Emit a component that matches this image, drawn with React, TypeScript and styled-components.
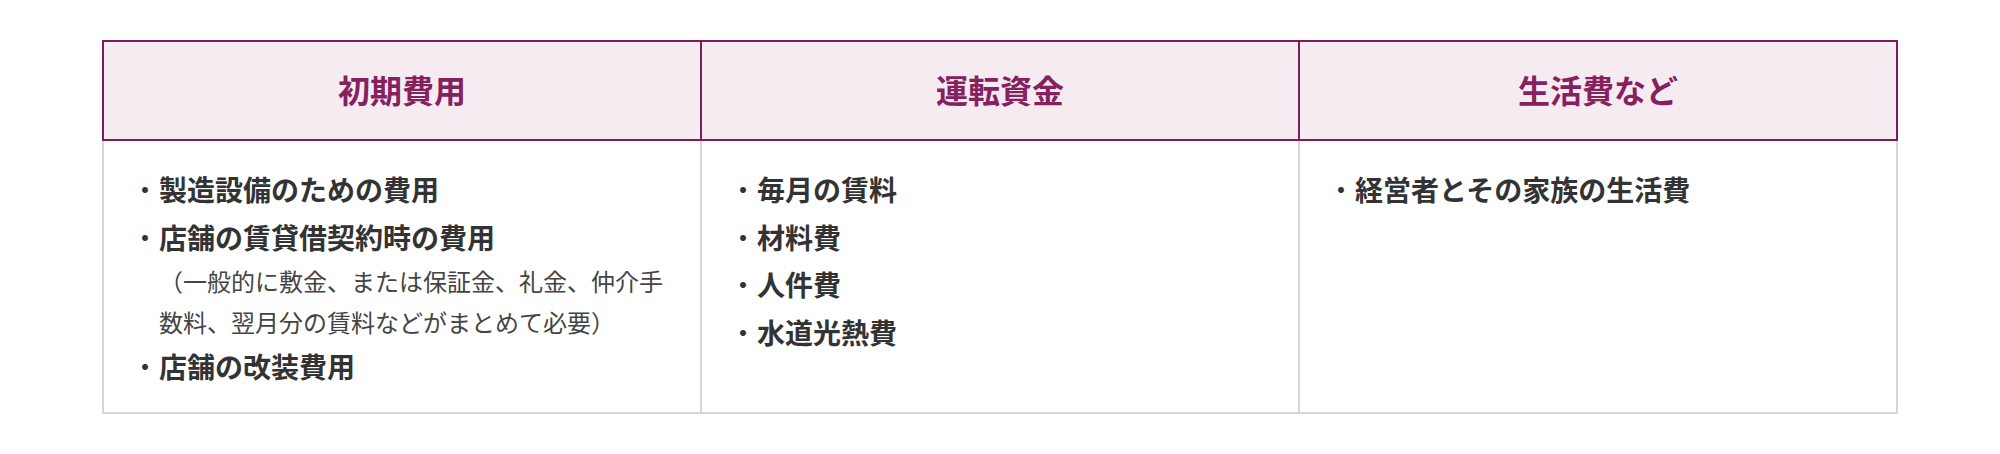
import styled, { createGlobalStyle } from "styled-components";
import { FC } from "react";

interface Column {
  title: string;
  items: { label: string; note?: string }[];
}

const columns: Column[] = [
  {
    title: "初期費用",
    items: [
      { label: "製造設備のための費用" },
      {
        label: "店舗の賃貸借契約時の費用",
        note: "（一般的に敷金、または保証金、礼金、仲介手数料、翌月分の賃料などがまとめて必要）",
      },
      { label: "店舗の改装費用" },
    ],
  },
  {
    title: "運転資金",
    items: [
      { label: "毎月の賃料" },
      { label: "材料費" },
      { label: "人件費" },
      { label: "水道光熱費" },
    ],
  },
  {
    title: "生活費など",
    items: [{ label: "経営者とその家族の生活費" }],
  },
];

const App: FC = () => (
  <>
    <GlobalStyle />
    <Page>
      <Table>
        <thead>
          <tr>
            {columns.map((col) => (
              <HeadCell key={col.title}>{col.title}</HeadCell>
            ))}
          </tr>
        </thead>
        <tbody>
          <tr>
            {columns.map((col) => (
              <BodyCell key={col.title}>
                <List>
                  {col.items.map((item) => (
                    <Item key={item.label}>
                      <Label>
                        <Bullet>・</Bullet>
                        {item.label}
                      </Label>
                      {item.note && <Note>{item.note}</Note>}
                    </Item>
                  ))}
                </List>
              </BodyCell>
            ))}
          </tr>
        </tbody>
      </Table>
    </Page>
  </>
);

export default App;

// styled components

const GlobalStyle = createGlobalStyle`
  body {
    margin: 0;
    background: #fff;
    font-family: "Noto Sans CJK JP", "Noto Sans", sans-serif;
  }
`;

const Page = styled.div`
  padding: 40px 102px;
`;

const Table = styled.table`
  width: 100%;
  table-layout: fixed;
  border-collapse: collapse;
`;

const HeadCell = styled.th`
  height: 94px;
  padding: 0 0 3px;
  background: #f6ebf1;
  border: 2px solid #7b1d57;
  color: #862160;
  font-size: 32px;
  font-weight: 700;
  text-align: center;
  vertical-align: middle;
`;

const BodyCell = styled.td`
  padding: 25px 27px 22px;
  border: 2px solid #d6d6d6;
  vertical-align: top;
  color: #333;
`;

const List = styled.ul`
  margin: 0;
  padding: 0;
  list-style: none;
`;

const Item = styled.li`
  font-size: 28px;
  line-height: 1.7;
`;

const Label = styled.div`
  display: flex;
  font-weight: 700;
`;

const Bullet = styled.span`
  flex: none;
  width: 1em;
  font-weight: 400;
`;

const Note = styled.p`
  margin: 0;
  padding-left: 28px;
  font-size: 24px;
  line-height: 1.7;
  font-weight: 400;
  color: #444;
`;
